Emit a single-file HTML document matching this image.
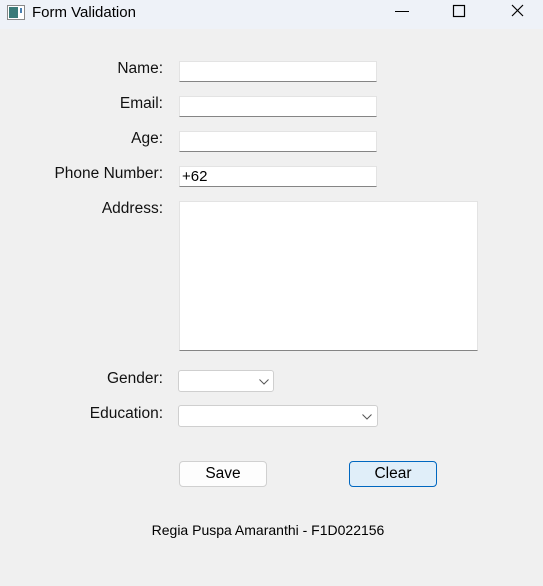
<!DOCTYPE html>
<html><head><style>
body{margin:0;width:543px;height:586px;background:#f0f0f0;font-family:"Liberation Sans",sans-serif;position:relative;overflow:hidden;color:#000}
.tb{position:absolute;left:0;top:0;width:543px;height:29px;background:#eef2f8}
.t{position:absolute;font-size:14px}
.lab{position:absolute;right:380px;font-size:15.5px;text-align:right;white-space:nowrap;color:#111}
.in{position:absolute;background:#fff;border:1px solid #e3e3e3;border-bottom:1px solid #858585;box-sizing:border-box}
.cb{position:absolute;background:#fff;border:1px solid #cfcfcf;border-radius:3px;box-sizing:border-box}
.btn{position:absolute;border:1px solid #d0d0d0;border-radius:4px;background:#fdfdfd;box-sizing:border-box;font-size:15.5px;text-align:center;line-height:24px}
</style></head><body>
<div class="tb">
<svg style="position:absolute;left:7px;top:5px" width="18" height="16"><rect x="0.5" y="0.5" width="17" height="14" fill="#fff" stroke="#888"/><rect x="2" y="2" width="9" height="11" fill="#3a7a78"/><rect x="13" y="3" width="2" height="5" fill="#4a7fb0"/></svg>
<div class="t" style="left:32px;top:4px;font-size:15px">Form Validation</div>
<svg style="position:absolute;left:390px;top:4px" width="140" height="16"><line x1="5" y1="7.5" x2="19" y2="7.5" stroke="#000"/><rect x="63.5" y="1.5" width="11" height="11" fill="none" stroke="#000" stroke-width="1.2"/><path d="M122 1L133 12M133 1L122 12" stroke="#000" stroke-width="1.2"/></svg>
</div>
<div class="lab" style="top:60px">Name:</div>
<div class="lab" style="top:95px">Email:</div>
<div class="lab" style="top:130px">Age:</div>
<div class="lab" style="top:165px">Phone Number:</div>
<div class="lab" style="top:200px">Address:</div>
<div class="lab" style="top:370px">Gender:</div>
<div class="lab" style="top:405px">Education:</div>
<div class="in" style="left:179px;top:61px;width:198px;height:21px"></div>
<div class="in" style="left:179px;top:96px;width:198px;height:21px"></div>
<div class="in" style="left:179px;top:131px;width:198px;height:21px"></div>
<div class="in" style="left:179px;top:166px;width:198px;height:21px;font-size:15px;padding:1px 0 0 2px">+62</div>
<div class="in" style="left:179px;top:201px;width:299px;height:150px"></div>
<div class="cb" style="left:178px;top:370px;width:96px;height:22px"><svg style="position:absolute;left:80px;top:8px" width="10" height="6"><path d="M0.5 0.5L5 5L9.5 0.5" fill="none" stroke="#555"/></svg></div>
<div class="cb" style="left:178px;top:405px;width:200px;height:22px"><svg style="position:absolute;left:183px;top:8px" width="10" height="6"><path d="M0.5 0.5L5 5L9.5 0.5" fill="none" stroke="#555"/></svg></div>
<div class="btn" style="left:179px;top:461px;width:88px;height:26px">Save</div>
<div class="btn" style="left:349px;top:461px;width:88px;height:26px;background:#e0eef9;border-color:#0067c0">Clear</div>
<div class="t" style="left:0;width:536px;text-align:center;top:522px;font-size:14px">Regia Puspa Amaranthi - F1D022156</div>
</body></html>
